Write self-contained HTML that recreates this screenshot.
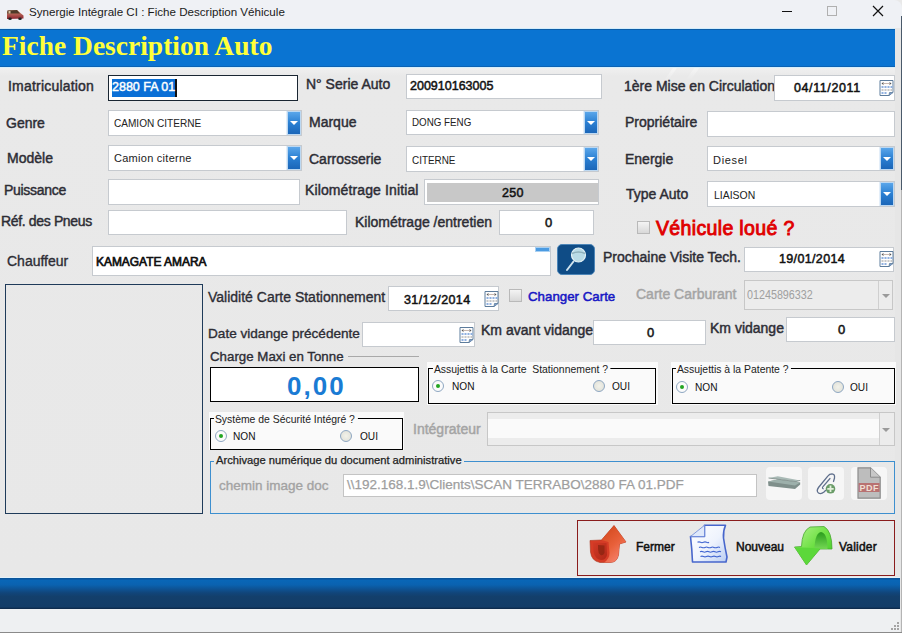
<!DOCTYPE html>
<html><head><meta charset="utf-8">
<style>
*{margin:0;padding:0;box-sizing:border-box}
html,body{width:902px;height:633px;overflow:hidden;background:#e9e9e9;font-family:"Liberation Sans",sans-serif}
.a{position:absolute}
#tb{left:0;top:0;width:902px;height:28px;background:#eff1f5;border-top-right-radius:8px}
#tbt{left:29px;top:5px;font-size:11.6px;line-height:14px;color:#1a1a1a;white-space:nowrap}
#band{left:0;top:28px;width:895px;height:40px;background:#0a74d2;border-top:1px solid #d2ecfb;border-bottom:1px solid #d6effc;box-shadow:inset 0 1px 0 #0b5ca6,inset 0 -1px 0 #0b62b4}
#band2{left:0;top:29px;width:895px;height:1px;background:#0c5fae}
#title{left:2px;top:27.5px;font-family:"Liberation Serif",serif;font-weight:bold;font-size:27.5px;line-height:36px;color:#ffff3a;white-space:nowrap}
#form{left:0;top:68px;width:895px;height:510px;background:linear-gradient(180deg,#f0f0f0 0,#e9e9e9 8px,#e8e8e8 100%)}
#rside{left:895px;top:28px;width:6px;height:604px;background:#e6e6e6}
#redge{left:901px;top:16px;width:1px;height:174px;background:#4a5a6a}
.l{position:absolute;font-size:14px;line-height:13px;color:#2d2d35;white-space:nowrap;-webkit-text-stroke-width:0.45px}
.lr{position:absolute;font-size:14px;line-height:14px;color:#2d2d35;white-space:nowrap;-webkit-text-stroke-width:0.35px}
.in{position:absolute;background:#fff;border:1px solid #c6cacf}
.v{position:absolute;font-size:12.5px;line-height:12.5px;color:#111;white-space:nowrap;-webkit-text-stroke-width:0.5px}
.c{position:absolute;font-size:11px;line-height:11px;color:#222;white-space:nowrap}
.dd{position:absolute;top:0;right:0;width:15px;height:100%;background:#bcd8f2;border-left:1px solid #e3eef9}
.dd i{position:absolute;left:1px;top:1px;right:1px;bottom:1px;background:linear-gradient(180deg,#5aa6ea 0,#2a7fd2 50%,#1b66b8 100%)}
.dd b{position:absolute;left:3px;top:50%;margin-top:-2px;width:0;height:0;border-left:4px solid transparent;border-right:4px solid transparent;border-top:4px solid #fff}
.cal{position:absolute;width:15px;height:16px}
.chk{position:absolute;width:13px;height:13px;border:1px solid #b9b9b9;background:linear-gradient(180deg,#f4f4f4,#d8d8d8)}
.grp{position:absolute;background:#fafafa}
.frm{position:absolute;border:1px solid #000}
.gt{position:absolute;font-size:11.5px;line-height:11.5px;color:#222;white-space:nowrap}
.gt .nar{background:#fafafa;padding:0 3px 0 1px}
.rad{position:absolute;width:12px;height:12px;border-radius:50%;border:1px solid #8ea7c2;background:radial-gradient(circle at 50% 50%,#f2f2ea 0,#e6e6de 60%,#dcdcd4 100%)}
.rad.on{background:#fbfbfb}
.rad.on::after{content:"";position:absolute;left:3px;top:3px;width:4px;height:4px;border-radius:50%;background:#22a522}
.nar{display:inline-block;transform-origin:0 0;transform:scaleX(0.88)}
.rt{position:absolute;font-size:11.5px;line-height:11.5px;color:#111;white-space:nowrap}
.gray{color:#a3a3a3}
</style></head><body>
<!-- title bar -->
<div id="tb" class="a"></div>
<svg class="a" style="left:6px;top:9px" width="18" height="11" viewBox="0 0 18 11"><defs><linearGradient id="car" x1="0" y1="0" x2="0" y2="1"><stop offset="0" stop-color="#d89070"/><stop offset="1" stop-color="#8a2430"/></linearGradient></defs><path d="M1 5 L1.5 1.5 L11 1 L15 4.5 L17.5 6.5 L17.5 9.5 L1 10 Z" fill="url(#car)"/><path d="M1.5 1.5 L11 1 L14 4.5 L1.2 4.5 Z" fill="#4e3a28"/><rect x="2.5" y="2" width="2" height="2.5" fill="#d8c0a0"/><ellipse cx="4" cy="9.8" rx="1.8" ry="1.2" fill="#222"/><ellipse cx="14" cy="9.8" rx="1.8" ry="1.2" fill="#222"/></svg>
<div id="tbt" class="a">Synergie Intégrale CI : Fiche Description Véhicule</div>
<div class="a" style="left:782px;top:11px;width:10px;height:1px;background:#111"></div>
<div class="a" style="left:827px;top:6px;width:10px;height:10px;border:1px solid #b0b0b0"></div>
<svg class="a" style="left:872px;top:5px" width="12" height="12" viewBox="0 0 12 12"><path d="M1 1 L11 11 M11 1 L1 11" stroke="#111" stroke-width="1.2"/></svg>

<div id="form" class="a"></div>
<div class="a" style="left:668px;top:68px;width:4px;height:14px;background:linear-gradient(180deg,rgba(255,255,255,0.45),rgba(255,255,255,0));transform:skewX(-35deg)"></div>
<div class="a" style="left:690px;top:68px;width:5px;height:12px;background:linear-gradient(180deg,rgba(255,255,255,0.4),rgba(255,255,255,0));transform:skewX(-35deg)"></div>
<div id="band" class="a"></div>
<div id="title" class="a">Fiche Description Auto</div>
<div id="rside" class="a"></div>
<div id="redge" class="a"></div><div class="a" style="left:901px;top:190px;width:1px;height:443px;background:#b4b4b4"></div>

<!-- row 1 -->
<div class="l" style="left:8px;top:80px;letter-spacing:0.2px">Imatriculation</div>
<div class="in" style="left:108px;top:75px;width:190px;height:26px;border:1px solid #1a2632"></div>
<div class="a" style="left:112px;top:79px;width:63px;height:18px;background:#0a6fd6"></div>
<div class="a" style="left:175px;top:79px;width:2px;height:18px;background:#111"></div>
<div class="v" style="left:112px;top:81px;color:#fff;-webkit-text-stroke-width:0.45px">2880 FA 01</div>

<div class="l" style="left:306px;top:78px">N° Serie Auto</div>
<div class="in" style="left:406px;top:74px;width:196px;height:25px"></div>
<div class="v" style="left:410px;top:80px">200910163005</div>

<div class="l" style="left:624px;top:80px">1ère Mise en Circulation</div>
<div class="in" style="left:774px;top:75px;width:121px;height:26px"></div>
<div class="v" style="left:794px;top:82px;letter-spacing:0.6px">04/11/2011</div>
<svg class="cal" style="left:879px;top:80px" width="14" height="16" viewBox="0 0 14 16"><path d="M0.5 0.5 H13.5 V12.5 L9.5 15.5 H0.5 Z" fill="#fdfdfd" stroke="#5d7c9c"/><path d="M2 3.5 L4 2 V5 Z M12 3.5 L10 2 V5 Z" fill="#555"/><rect x="4" y="3" width="6" height="1" fill="#c9b8b0"/><g fill="#8fb0e0"><rect x="2" y="6" width="2" height="2"/><rect x="5" y="6" width="2" height="2"/><rect x="8" y="6" width="2" height="2"/><rect x="11" y="6" width="2" height="2"/><rect x="2" y="12" width="2" height="2"/><rect x="5" y="12" width="2" height="2"/></g><g fill="#c8c8c8"><rect x="2" y="9" width="2" height="2"/><rect x="5" y="9" width="2" height="2"/><rect x="8" y="9" width="2" height="2"/><rect x="11" y="9" width="2" height="2"/></g><path d="M9.5 15.5 L10 12.5 L13.5 12.5" fill="#7d9cc6" stroke="#5d7c9c" stroke-width="0.8"/></svg>

<!-- row 2 -->
<div class="l" style="left:6px;top:117px">Genre</div>
<div class="in" style="left:108px;top:110px;width:194px;height:26px"><div class="dd"><i></i><b></b></div></div>
<div class="c" style="left:114px;top:118px"><span class="nar" style="transform:scaleX(0.915)">CAMION CITERNE</span></div>

<div class="l" style="left:309px;top:116px">Marque</div>
<div class="in" style="left:406px;top:110px;width:193px;height:25px"><div class="dd"><i></i><b></b></div></div>
<div class="c" style="left:412px;top:117px"><span class="nar" style="transform:scaleX(0.89)">DONG FENG</span></div>

<div class="l" style="left:625px;top:116px">Propriétaire</div>
<div class="in" style="left:707px;top:111px;width:188px;height:26px"></div>

<!-- row 3 -->
<div class="l" style="left:7px;top:152px">Modèle</div>
<div class="in" style="left:108px;top:145px;width:194px;height:26px"><div class="dd"><i></i><b></b></div></div>
<div class="c" style="left:114px;top:153px;letter-spacing:0.27px">Camion citerne</div>

<div class="l" style="left:309px;top:153px">Carrosserie</div>
<div class="in" style="left:406px;top:146px;width:193px;height:26px"><div class="dd"><i></i><b></b></div></div>
<div class="c" style="left:412px;top:155px"><span class="nar" style="transform:scaleX(0.9)">CITERNE</span></div>

<div class="l" style="left:625px;top:153px">Energie</div>
<div class="in" style="left:707px;top:146px;width:188px;height:25px"><div class="dd"><i></i><b></b></div></div>
<div class="c" style="left:713px;top:155px;letter-spacing:0.7px">Diesel</div>

<!-- row 4 -->
<div class="l" style="left:4px;top:184px;letter-spacing:-0.3px">Puissance</div>
<div class="in" style="left:108px;top:179px;width:192px;height:26px"></div>

<div class="l" style="left:305px;top:184px;letter-spacing:0.12px">Kilométrage Initial</div>
<div class="in" style="left:424px;top:179px;width:175px;height:26px"><div class="a" style="left:2px;top:3px;right:0;bottom:2px;background:#c8c8c8"></div></div>
<div class="v" style="left:502px;top:187px;letter-spacing:0.3px">250</div>

<div class="l" style="left:626px;top:188px">Type Auto</div>
<div class="in" style="left:707px;top:181px;width:188px;height:26px"><div class="dd"><i></i><b></b></div></div>
<div class="c" style="left:714px;top:190px"><span class="nar" style="transform:scaleX(0.95)">LIAISON</span></div>

<!-- row 5 -->
<div class="l" style="left:1px;top:215px;letter-spacing:-0.35px">Réf. des Pneus</div>
<div class="in" style="left:108px;top:210px;width:239px;height:25px"></div>
<div class="l" style="left:355px;top:216px">Kilométrage /entretien</div>
<div class="in" style="left:499px;top:210px;width:95px;height:25px"></div>
<div class="v" style="left:545px;top:217px;font-size:13px">0</div>

<div class="chk" style="left:637px;top:221px"></div>
<div class="a" style="left:656px;top:219px;font-size:19.5px;line-height:19.5px;color:#e00000;white-space:nowrap;letter-spacing:0.35px;-webkit-text-stroke-width:0.9px">Véhicule loué ?</div>

<!-- row 6 -->
<div class="lr" style="left:7px;top:254px">Chauffeur</div>
<div class="in" style="left:92px;top:246px;width:459px;height:30px"></div>
<div class="a" style="left:535px;top:247px;width:15px;height:5px;background:#4b9be2;border:1px solid #a9d0f2"></div>
<div class="v" style="left:96px;top:256px;-webkit-text-stroke-width:0.7px"><span class="nar" style="transform:scaleX(0.955)">KAMAGATE AMARA</span></div>

<div class="a" style="left:557px;top:244px;width:38px;height:31px;border-radius:5px;background:#0f4c86;border:1px solid #4d86b8"></div>
<svg class="a" style="left:557px;top:244px" width="38" height="31" viewBox="0 0 38 31"><line x1="10" y1="26" x2="16.5" y2="17.5" stroke="#cfe3ee" stroke-width="2" stroke-linecap="round"/><circle cx="21.5" cy="11" r="7" fill="#b9dbe6" stroke="#e2f0f5" stroke-width="1.2"/><path d="M15 9.5 Q21.5 6.5 28 9.5" stroke="#8fb0bb" stroke-width="1.5" fill="none"/></svg>

<div class="l" style="left:603px;top:251px">Prochaine Visite Tech.</div>
<div class="in" style="left:744px;top:247px;width:150px;height:25px"></div>
<div class="v" style="left:779px;top:253px;letter-spacing:0.35px">19/01/2014</div>
<svg class="cal" style="left:879px;top:251px" width="14" height="16" viewBox="0 0 14 16"><path d="M0.5 0.5 H13.5 V12.5 L9.5 15.5 H0.5 Z" fill="#fdfdfd" stroke="#5d7c9c"/><path d="M2 3.5 L4 2 V5 Z M12 3.5 L10 2 V5 Z" fill="#555"/><rect x="4" y="3" width="6" height="1" fill="#c9b8b0"/><g fill="#8fb0e0"><rect x="2" y="6" width="2" height="2"/><rect x="5" y="6" width="2" height="2"/><rect x="8" y="6" width="2" height="2"/><rect x="11" y="6" width="2" height="2"/><rect x="2" y="12" width="2" height="2"/><rect x="5" y="12" width="2" height="2"/></g><g fill="#c8c8c8"><rect x="2" y="9" width="2" height="2"/><rect x="5" y="9" width="2" height="2"/><rect x="8" y="9" width="2" height="2"/><rect x="11" y="9" width="2" height="2"/></g><path d="M9.5 15.5 L10 12.5 L13.5 12.5" fill="#7d9cc6" stroke="#5d7c9c" stroke-width="0.8"/></svg>

<!-- photo -->
<div class="a" style="left:5px;top:284px;width:198px;height:230px;border:1px solid #1f3b5a"></div>

<!-- row 7 -->
<div class="lr" style="left:208px;top:290px">Validité Carte Stationnement</div>
<div class="in" style="left:388px;top:286px;width:111px;height:25px"></div>
<div class="v" style="left:404px;top:294px;letter-spacing:0.4px">31/12/2014</div>
<svg class="cal" style="left:484px;top:291px" width="14" height="16" viewBox="0 0 14 16"><path d="M0.5 0.5 H13.5 V12.5 L9.5 15.5 H0.5 Z" fill="#fdfdfd" stroke="#5d7c9c"/><path d="M2 3.5 L4 2 V5 Z M12 3.5 L10 2 V5 Z" fill="#555"/><rect x="4" y="3" width="6" height="1" fill="#c9b8b0"/><g fill="#8fb0e0"><rect x="2" y="6" width="2" height="2"/><rect x="5" y="6" width="2" height="2"/><rect x="8" y="6" width="2" height="2"/><rect x="11" y="6" width="2" height="2"/><rect x="2" y="12" width="2" height="2"/><rect x="5" y="12" width="2" height="2"/></g><g fill="#c8c8c8"><rect x="2" y="9" width="2" height="2"/><rect x="5" y="9" width="2" height="2"/><rect x="8" y="9" width="2" height="2"/><rect x="11" y="9" width="2" height="2"/></g><path d="M9.5 15.5 L10 12.5 L13.5 12.5" fill="#7d9cc6" stroke="#5d7c9c" stroke-width="0.8"/></svg>
<div class="chk" style="left:509px;top:289px"></div>
<div class="a" style="left:528px;top:290px;font-size:13.3px;line-height:13px;color:#1616c4;white-space:nowrap;-webkit-text-stroke-width:0.5px">Changer Carte</div>
<div class="l gray" style="left:636px;top:288px;color:#a4a4a4">Carte Carburant</div>
<div class="a" style="left:744px;top:280px;width:149px;height:30px;background:#ececec;border:1px solid #c7c7c7"></div>
<div class="a" style="left:878px;top:281px;width:1px;height:28px;background:#cfcfcf"></div>
<div class="a" style="left:882px;top:294px;width:0;height:0;border-left:4px solid transparent;border-right:4px solid transparent;border-top:4px solid #9a9a9a"></div>
<div class="a" style="left:747px;top:289px;font-size:12.5px;line-height:12.5px;color:#a0a0a0;white-space:nowrap"><span class="nar" style="transform:scaleX(0.86)">01245896332</span></div>

<!-- row 8 -->
<div class="lr" style="left:208px;top:327px;font-size:13.6px">Date vidange précédente</div>
<div class="in" style="left:362px;top:322px;width:113px;height:25px"></div>
<svg class="cal" style="left:459px;top:327px" width="14" height="16" viewBox="0 0 14 16"><path d="M0.5 0.5 H13.5 V12.5 L9.5 15.5 H0.5 Z" fill="#fdfdfd" stroke="#5d7c9c"/><path d="M2 3.5 L4 2 V5 Z M12 3.5 L10 2 V5 Z" fill="#555"/><rect x="4" y="3" width="6" height="1" fill="#c9b8b0"/><g fill="#8fb0e0"><rect x="2" y="6" width="2" height="2"/><rect x="5" y="6" width="2" height="2"/><rect x="8" y="6" width="2" height="2"/><rect x="11" y="6" width="2" height="2"/><rect x="2" y="12" width="2" height="2"/><rect x="5" y="12" width="2" height="2"/></g><g fill="#c8c8c8"><rect x="2" y="9" width="2" height="2"/><rect x="5" y="9" width="2" height="2"/><rect x="8" y="9" width="2" height="2"/><rect x="11" y="9" width="2" height="2"/></g><path d="M9.5 15.5 L10 12.5 L13.5 12.5" fill="#7d9cc6" stroke="#5d7c9c" stroke-width="0.8"/></svg>
<div class="l" style="left:481px;top:324px">Km avant vidange</div>
<div class="in" style="left:593px;top:320px;width:113px;height:25px"></div>
<div class="v" style="left:647px;top:327px;font-size:13px">0</div>
<div class="l" style="left:710px;top:322px">Km vidange</div>
<div class="in" style="left:786px;top:317px;width:109px;height:25px"></div>
<div class="v" style="left:838px;top:324px;font-size:13px">0</div>

<!-- charge maxi -->
<div class="lr" style="left:210px;top:350px;font-size:13.3px">Charge Maxi en Tonne</div>
<div class="a" style="left:348px;top:356px;width:71px;height:1px;background:#a9a9a9"></div>
<div class="a" style="left:210px;top:367px;width:209px;height:35px;background:#fff;border:1px solid #000"></div>
<div class="a" style="left:287px;top:373px;font-weight:bold;font-size:26px;line-height:26px;color:#1a7bd4;letter-spacing:2px;white-space:nowrap">0,00</div>

<!-- groups -->
<div class="grp" style="left:427px;top:362px;width:231px;height:43px"></div>
<div class="frm" style="left:428px;top:368px;width:228px;height:36px"></div>
<div class="gt" style="left:433px;top:364px"><span class="nar" style="transform:scaleX(0.905)">Assujettis à la Carte&nbsp; Stationnement ?</span></div>
<div class="rad on" style="left:432px;top:380px"></div>
<div class="rt" style="left:452px;top:381px"><span class="nar">NON</span></div>
<div class="rad" style="left:593px;top:380px"></div>
<div class="rt" style="left:612px;top:381px"><span class="nar">OUI</span></div>

<div class="grp" style="left:671px;top:362px;width:225px;height:43px"></div>
<div class="frm" style="left:672px;top:368px;width:223px;height:36px"></div>
<div class="gt" style="left:676px;top:364px"><span class="nar" style="transform:scaleX(0.905)">Assujettis à la Patente ?</span></div>
<div class="rad on" style="left:676px;top:381px"></div>
<div class="rt" style="left:695px;top:382px"><span class="nar">NON</span></div>
<div class="rad" style="left:832px;top:381px"></div>
<div class="rt" style="left:850px;top:382px"><span class="nar">OUI</span></div>

<div class="grp" style="left:209px;top:412px;width:195px;height:38px"></div>
<div class="frm" style="left:210px;top:418px;width:193px;height:32px"></div>
<div class="gt" style="left:214px;top:414px"><span class="nar" style="transform:scaleX(0.905)">Système de Sécurité Intégré ?</span></div>
<div class="rad on" style="left:215px;top:430px"></div>
<div class="rt" style="left:233px;top:431px"><span class="nar">NON</span></div>
<div class="rad" style="left:340px;top:430px"></div>
<div class="rt" style="left:360px;top:431px"><span class="nar">OUI</span></div>

<div class="l" style="left:413px;top:423px;color:#a4a4a4">Intégrateur</div>
<div class="a" style="left:487px;top:412px;width:408px;height:34px;background:#ececec;border:1px solid #c7c7c7"></div>
<div class="a" style="left:488px;top:419px;width:391px;height:19px;background:#fafafa"></div>
<div class="a" style="left:879px;top:413px;width:1px;height:32px;background:#cfcfcf"></div>
<div class="a" style="left:882px;top:428px;width:0;height:0;border-left:4px solid transparent;border-right:4px solid transparent;border-top:4px solid #9a9a9a"></div>

<!-- archivage -->
<div class="a" style="left:210px;top:461px;width:685px;height:53px;border:1px solid #3d8fcf"></div>
<div class="a" style="left:214px;top:455px;font-size:11.2px;line-height:11px;color:#222;background:#e9e9e9;padding:0 2px;white-space:nowrap;-webkit-text-stroke-width:0.25px">Archivage numérique du document administrative</div>
<div class="a gray" style="left:219px;top:479px;font-size:13.5px;line-height:14px;white-space:nowrap;-webkit-text-stroke-width:0.35px">chemin image doc</div>
<div class="in" style="left:343px;top:474px;width:414px;height:23px;border-color:#c4c4c4"></div>
<div class="a" style="left:347px;top:478px;font-size:13.5px;line-height:14px;color:#9e9e9e;white-space:nowrap;-webkit-text-stroke-width:0.25px">\\192.168.1.9\Clients\SCAN TERRABO\2880 FA 01.PDF</div>

<div class="a" style="left:766px;top:467px;width:36px;height:33px;background:#f6f6f6;border-radius:4px"></div>
<svg class="a" style="left:766px;top:467px" width="36" height="33" viewBox="0 0 36 33"><path d="M2 14.5 L12 12.5 L34.2 15.5 L34.2 17.5 L29 22 L2.5 19 Z" fill="#7f8f8b"/><path d="M2 14.5 L12 12.5 L34.2 15.5 L29 18.5 Z" fill="#9db0ab"/><path d="M2.5 11 L11.8 9.2 L34.2 13.4 L30 14.6 Z" fill="#a9bab6"/><path d="M2.5 11 L30 14.6 L34.2 13.4" fill="none" stroke="#7b8a87" stroke-width="0.8"/></svg>
<div class="a" style="left:808px;top:467px;width:36px;height:33px;background:#f6f6f6;border-radius:4px"></div>
<svg class="a" style="left:808px;top:467px" width="36" height="33" viewBox="0 0 36 33"><path d="M25.5 14.5 L26.5 11 Q27 7 24 6.8 Q21.5 6.8 20 8.8 L10.5 20.5 Q8 24 10.5 26 Q13 27.5 16 25 L17.5 23.5" fill="none" stroke="#5f6f8c" stroke-width="1.3" stroke-linecap="round"/><path d="M22 11.5 L15 19.5 Q13.8 21.2 15.2 21.8" fill="none" stroke="#5f6f8c" stroke-width="1.2" stroke-linecap="round"/><circle cx="22.5" cy="21.8" r="4.8" fill="#6a9c68"/><path d="M22.5 18.6 V25 M19.3 21.8 H25.7" stroke="#e4efdc" stroke-width="1.8"/></svg>
<div class="a" style="left:851px;top:467px;width:36px;height:33px;background:#f6f6f6;border-radius:4px"></div>
<svg class="a" style="left:851px;top:467px" width="36" height="33" viewBox="0 0 36 33"><path d="M7 0.8 L19.5 0.8 L29.2 10.2 L29.2 31.2 L7 31.2 Z" fill="#bdbdbd" stroke="#8c8c8c" stroke-width="1.2"/><path d="M19.5 0.8 L19.5 10.2 L29.2 10.2" fill="#c8c8c8" stroke="#8c8c8c" stroke-width="1"/><rect x="7.6" y="16" width="21" height="9" fill="#b87272"/><text x="18.2" y="24.2" font-family="Liberation Sans" font-weight="bold" font-size="9" fill="#f0dfd2" text-anchor="middle" letter-spacing="0.5">PDF</text></svg>

<!-- buttons -->
<div class="a" style="left:577px;top:520px;width:318px;height:56px;border:1.5px solid #8a1c1c"></div>
<svg class="a" style="left:584px;top:522px" width="48" height="46" viewBox="0 0 48 46"><defs><linearGradient id="gr1" x1="0" y1="0" x2="0.6" y2="1"><stop offset="0" stop-color="#cf4418"/><stop offset="0.6" stop-color="#e8603a"/><stop offset="1" stop-color="#f5806a"/></linearGradient><linearGradient id="gr2" x1="0" y1="0" x2="1" y2="1"><stop offset="0" stop-color="#d23a26"/><stop offset="1" stop-color="#b02818"/></linearGradient></defs>
<path d="M6 18.5 L17.5 18 L30 3.5 L42 20 L35.5 22 L34.5 33 Q33 40.5 26 40.5 L16 40.5 Q7.5 39 6.5 30 Z" fill="#d63c26" stroke="#a83018" stroke-width="0.6"/>
<path d="M17.5 18 L30 3.5 L42 20 L35.5 22 L34.5 33 Q33 40.5 26 40.5 L20 40.5 Q25.5 37 25.5 31 L24.5 20 Z" fill="url(#gr1)"/>
<path d="M9 20.5 L22.5 21 L23 33 Q22 38 17 38 Q11 37 9.5 30 Z" fill="url(#gr2)"/>
<path d="M14 23 L20.5 23.5 L20.5 31 Q19 34 16.5 33 Q14 31 14 27 Z" fill="#8a2410" opacity="0.75"/></svg>
<div class="v" style="left:636px;top:541px;font-size:12px;line-height:12px">Fermer</div>
<svg class="a" style="left:686px;top:522px" width="48" height="46" viewBox="0 0 48 46"><defs><linearGradient id="gb1" x1="0" y1="0" x2="1" y2="1"><stop offset="0" stop-color="#ffffff"/><stop offset="0.55" stop-color="#eef3fd"/><stop offset="1" stop-color="#b9cdf2"/></linearGradient></defs>
<path d="M18.5 3.3 L39.5 3.3 Q37 9 37.5 16 Q39 26 41 35 L40 40 L6.5 40 Q6 27 4.5 14.5 L18.5 14.5 Z" fill="url(#gb1)" stroke="#4766cc" stroke-width="1.6" stroke-linejoin="round"/>
<path d="M4.5 14.5 L18.5 3.3 L18.5 14.5 Z" fill="#dfe8fa" stroke="#6a86d8" stroke-width="0.8"/>
<path d="M11.5 20.3 Q13 19.5 14.5 20.3 T17.5 20.3 T20.5 20.3 T23 20.3 M13 25.4 Q14.5 24.6 16 25.4 T19 25.4 T22 25.4 T25 25.4 T28 25.4 T31 25.4 T34 25.4 M14 29.8 Q15.5 29 17 29.8 T20 29.8 T23 29.8 T26 29.8 T29 29.8 T32 29.8 T35 29.8 M14.5 34.5 Q16 33.7 17.5 34.5 T20.5 34.5 T23.5 34.5 T26.5 34.5 T29.5 34.5 T32.5 34.5 T35 34.5" fill="none" stroke="#3f64d0" stroke-width="1.1"/></svg>
<div class="v" style="left:736px;top:541px;font-size:12px;line-height:12px">Nouveau</div>
<svg class="a" style="left:790px;top:522px" width="48" height="48" viewBox="0 0 48 48"><defs><linearGradient id="gg1" x1="0" y1="0" x2="1" y2="1"><stop offset="0" stop-color="#b4f48e"/><stop offset="0.5" stop-color="#6ee044"/><stop offset="1" stop-color="#3cc624"/></linearGradient><linearGradient id="gg2" x1="0" y1="0" x2="0" y2="1"><stop offset="0" stop-color="#2a9c1c"/><stop offset="1" stop-color="#74d854"/></linearGradient></defs>
<path d="M4.5 25 L11.5 24.5 Q12 9 20 5 L34 4.5 Q42 9 42 27 L37.5 27 L30 27 L16.5 43 Z" fill="url(#gg1)" stroke="#4aa832" stroke-width="0.8" stroke-linejoin="round"/>
<path d="M24.5 26.5 Q25 11 31 10 Q37.5 11 37.5 27 Z" fill="url(#gg2)"/>
<path d="M4.5 25 L30 26.5 L16.5 43 Z" fill="#5cd83a"/></svg>
<div class="v" style="left:839px;top:541px;font-size:12px;line-height:12px;letter-spacing:0.2px">Valider</div>

<!-- bottom bar -->
<div class="a" style="left:0;top:578px;width:900px;height:31px;background:linear-gradient(180deg,#0a5595 0,#0a55a0 3%,#0966b6 8%,#0a62b0 22%,#11457a 48%,#133f6b 60%,#133d68 94%,#0e2c4e 97%,#0e2c4e 100%)"></div>
<div class="a" style="left:0;top:577px;width:900px;height:1px;background:#e2f1fb"></div>
<div class="a" style="left:0;top:609px;width:900px;height:1px;background:#e4edf5"></div>
<div class="a" style="left:0;top:609px;width:900px;height:23px;background:#eef0f2"></div>
<div class="a" style="left:0;top:632px;width:902px;height:1px;background:#8a8a8a"></div>
<svg class="a" style="left:890px;top:621px" width="10" height="10" viewBox="0 0 10 10"><g fill="#a4a4a4"><rect x="7" y="1" width="2" height="2"/><rect x="4" y="4" width="2" height="2"/><rect x="7" y="4" width="2" height="2"/><rect x="1" y="7" width="2" height="2"/><rect x="4" y="7" width="2" height="2"/><rect x="7" y="7" width="2" height="2"/></g></svg>
</body></html>
